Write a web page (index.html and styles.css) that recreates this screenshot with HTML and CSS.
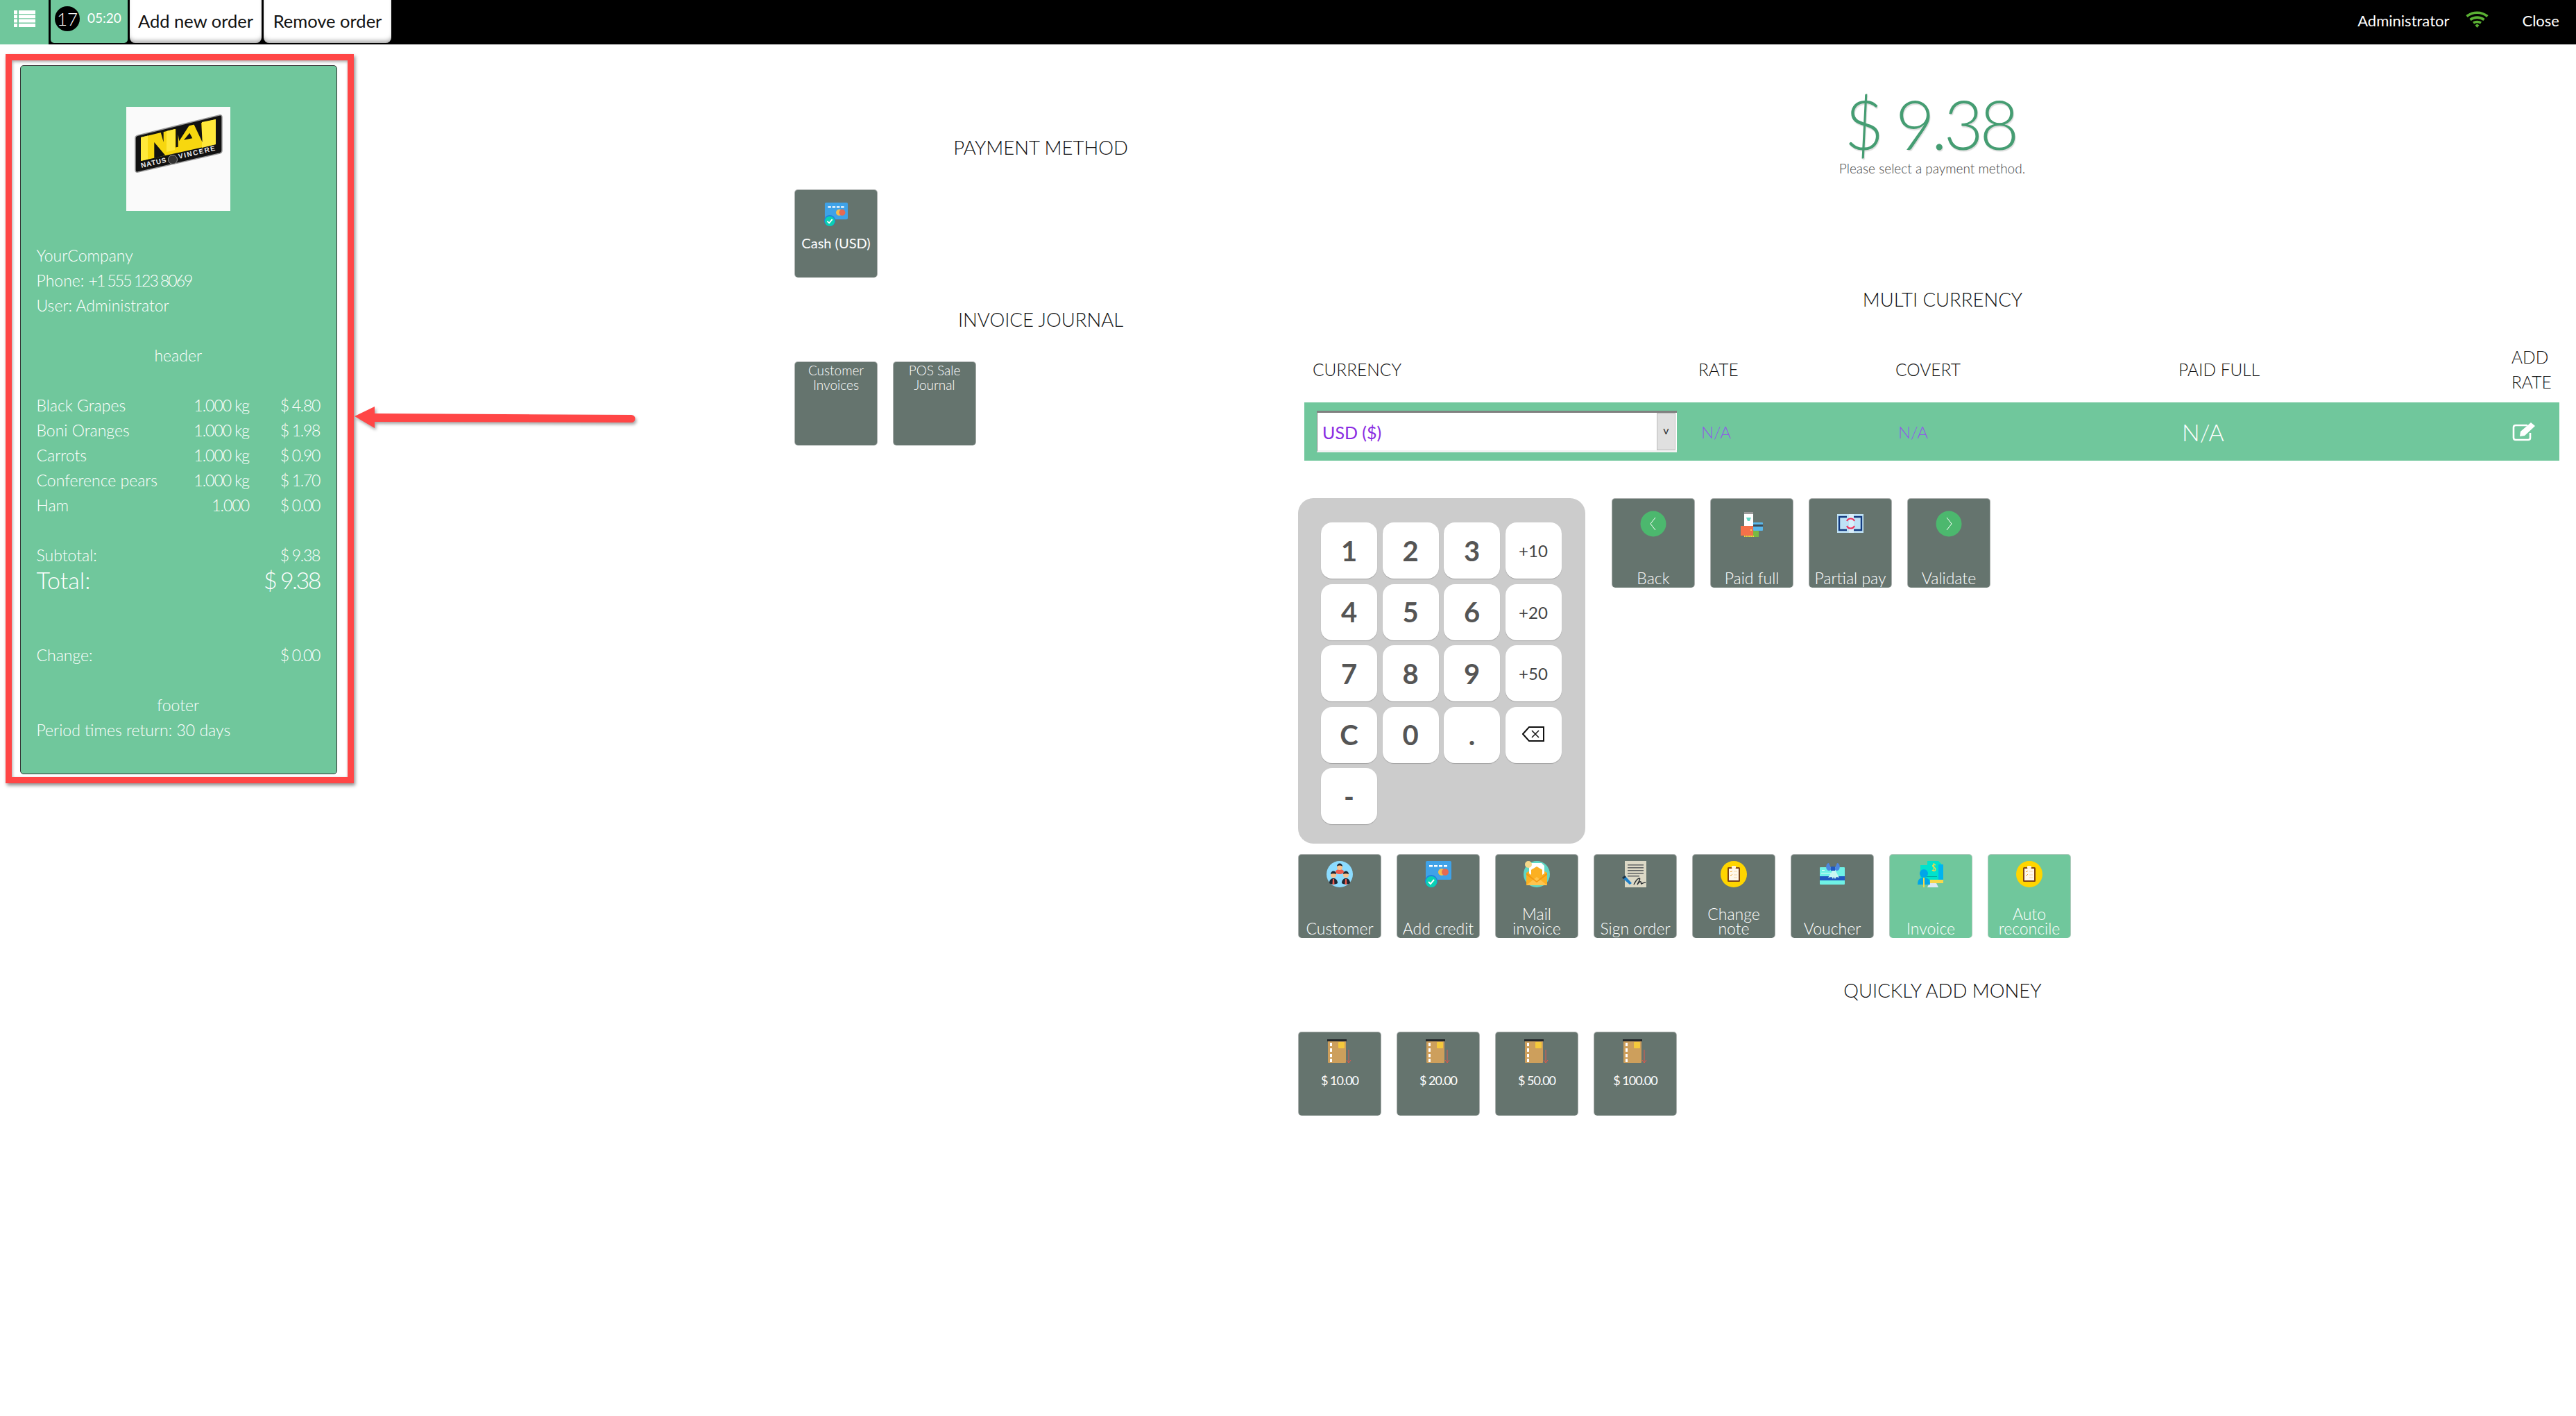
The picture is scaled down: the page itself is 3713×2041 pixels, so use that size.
FILE: index.html
```html
<!DOCTYPE html>
<html lang="en">
<head>
    <meta charset="UTF-8">
    <title>POS payment</title>
    <link rel="stylesheet" href="styles.css">
</head>
<body>

<!-- shared icons -->
<svg class="defs" width="0" height="0">
    <symbol id="ic-credit" viewBox="0 0 38 38">
        <rect x="1" y="0" width="37" height="27" rx="2" fill="#3fa2e8"/>
        <path d="M6 6h5v2.500H6zM13 6h5v2.500h-5zM20 6h5v2.500h-5zM27 6h5v2.500h-5z" fill="#fff"/>
        <circle cx="24" cy="16" r="5" fill="#f5bd4f"/>
        <circle cx="29" cy="16" r="5" fill="#e56a52"/>
        <circle cx="9" cy="29" r="9" fill="#1f7fe0"/>
        <circle cx="9" cy="30" r="8" fill="#0ad1b4"/>
        <path d="M5 30l3 3 5-6" fill="none" stroke="#fff" stroke-width="2"/>
    </symbol>
    <symbol id="ic-customer" viewBox="0 0 38 38">
        <circle cx="19" cy="19" r="19" fill="#8cdcff"/>
        <path d="M13 16c0-3 3-4 6-4s6 1 6 4c0 2-3 3-6 3s-6-1-6-3z" fill="#ef5b4c"/>
        <circle cx="19" cy="9" r="4" fill="#f7c08c"/>
        <path d="M15 8c0-6 8-6 8 0-2-2-6-2-8 0z" fill="#1d2733"/>
        <path d="M4 32c0-5 3-7 6-7s6 2 6 7c-3 2-9 2-12 0zM22 32c0-5 3-7 6-7s6 2 6 7c-3 2-9 2-12 0z" fill="#1d2733"/>
        <path d="M9 26h2l.5 8h-3zM27 26h2l.5 8h-3z" fill="#ef5b4c"/>
        <circle cx="10" cy="20" r="4" fill="#f7c08c"/>
        <circle cx="28" cy="20" r="4" fill="#f7c08c"/>
        <path d="M6 19c0-6 8-6 8 0-2-1-6-1-8 0zM24 19c0-6 8-6 8 0-2-1-6-1-8 0z" fill="#1d2733"/>
    </symbol>
    <symbol id="ic-mail" viewBox="0 0 38 38">
        <circle cx="19" cy="19" r="19" fill="#5fd6c4"/>
        <path d="M8 3h18l4 4v14H8z" fill="#fff"/>
        <path d="M12 11h14v2H12zM12 15h14v2H12z" fill="#e9eef0"/>
        <path d="M4 17l15-9 15 9v18H4z" fill="#fbb022"/>
        <path d="M8 13l3-1v8l-3-2zM30 12l-3 0v8l3-2z" fill="#fff"/>
        <path d="M4 35l15-12 15 12z" fill="#fdc44e"/>
        <path d="M4 17l15 12 15-12v3L19 31 4 20z" fill="#f39a12"/>
        <circle cx="7" cy="5" r="5" fill="#f5d88a"/>
    </symbol>
    <symbol id="ic-sign" viewBox="0 0 38 38">
        <rect x="4" y="0" width="31" height="38" fill="#dcd9c6"/>
        <path d="M8 5h23v1.500H8zM8 9h23v1.500H8zM8 13h23v1.500H8zM8 17h23v1.500H8zM8 21h17v1.500H8z" fill="#5b5f60"/>
        <path d="M0 24l4-3 10 11-3 2z" fill="#1f7fc8"/>
        <path d="M0 24l4-3 2 2-4 3z" fill="#23303a"/>
        <path d="M17 34c3-6 6-9 8-9s-2 7-3 9c2-3 4-5 5-4s0 3 1 3 2-2 6-2" fill="none" stroke="#2a2f33" stroke-width="1.500"/>
    </symbol>
    <symbol id="ic-note" viewBox="0 0 38 38">
        <circle cx="19" cy="19" r="19" fill="#ffd500"/>
        <rect x="10" y="9" width="18" height="21" rx="1.500" fill="#7b4317"/>
        <rect x="12" y="11" width="14" height="17" fill="#fff8ec"/>
        <rect x="16" y="7" width="6" height="4" rx="1" fill="#fff2d8"/>
        <path d="M14 15l1 1 2-2M14 20l1 1 2-2" fill="none" stroke="#f0a83a" stroke-width="1"/>
        <path d="M19 15h5M19 20h5M19 24h5" stroke="#f3d9a8" stroke-width="1"/>
    </symbol>
    <symbol id="ic-voucher" viewBox="0 0 38 38">
        <rect x="1" y="9" width="36" height="25" rx="1" fill="#6ff1e6"/>
        <rect x="1" y="22" width="36" height="6" fill="#2058c0"/>
        <path d="M4 13h4v1H4zM3 17h14v1H3z" fill="#e6fffb"/>
        <path d="M20 13l-7 11 5-1 2 3 1-3 2 3 2-3 4 1-6-11z" fill="#c9f6f2"/>
        <path d="M18 12L14 3c-3 0-5 5-3 9 2 3 5 2 7 0zM22 12l4-9c3 0 5 5 3 9-2 3-5 2-7 0z" fill="#4c86e0"/>
        <rect x="17" y="8" width="6" height="6" fill="#2058c0"/>
    </symbol>
    <symbol id="ic-invoice" viewBox="0 0 38 38">
        <path d="M4 6h10V0h16l5 5v24H4z" fill="#00e2cc"/>
        <path d="M30 5h7v22H30z" fill="#00b4f0"/>
        <path d="M26 6c-3-2-5 0-4 2s4 1 4 4-3 3-5 1M23.500 3v12" fill="none" stroke="#f6d84a" stroke-width="1.300"/>
        <path d="M12 22h16v1H12z" fill="#00a89e"/>
        <path d="M18 32h19v-5H18z" fill="#f6d84a"/>
        <path d="M14 38l3-6h10l3 6z" fill="#dbe9f4"/>
        <circle cx="9" cy="18" r="6" fill="#00a6e8"/>
        <path d="M0 34c0-8 4-10 9-10s9 2 9 10z" fill="#00a6e8"/>
        <path d="M8 24h2v14H8z" fill="#f6d84a"/>
    </symbol>
    <symbol id="ic-money" viewBox="0 0 36 36">
        <rect x="1" y="1" width="26" height="33" rx="1" fill="#cd9f5c"/>
        <rect x="0" y="0" width="28" height="3" fill="#23272b"/>
        <path d="M4 5h3v5H4zM4 13h3v5H4zM4 21h3v5H4zM4 28h3v5H4z" fill="#fff"/>
        <rect x="16" y="4" width="9" height="9" rx="1" fill="#f4c93c"/>
        <path d="M31 15v19M28 30l3 4 3-4" fill="none" stroke="#e0584c" stroke-width="1"/>
    </symbol>
    <symbol id="ic-paid" viewBox="0 0 38 38">
        <rect x="8" y="2" width="13" height="22" rx="1" fill="#fff"/>
        <rect x="8" y="2" width="13" height="3" fill="#9a9a9a"/>
        <path d="M11 10h7l-2 5h-3z" fill="#5fd6c4"/>
        <rect x="14" y="26" width="15" height="12" fill="#79b943"/>
        <rect x="21" y="17" width="14" height="12" rx="1" fill="#5ab7ea"/>
        <rect x="21" y="20" width="14" height="3" fill="#3b4a55"/>
        <path d="M8 37h15" stroke="#f2d43c" stroke-width="2" stroke-dasharray="2 1"/>
        <rect x="3" y="22" width="18" height="14" fill="#f4714a"/>
        <circle cx="18" cy="28" r="1" fill="#ffe27a"/>
    </symbol>
    <symbol id="ic-partial" viewBox="0 0 38 38">
        <rect x="0" y="5" width="38" height="27" fill="#bfe2f6"/>
        <rect x="17" y="5" width="7" height="27" fill="#d9eefa"/>
        <path d="M14 9H3v19h11M24 9h11v19H24" fill="none" stroke="#123a80" stroke-width="2.400"/>
        <path d="M14 15a6 6 0 0 1 11 0M25 22a6 6 0 0 1-11 0" fill="none" stroke="#ef2f5b" stroke-width="2"/>
    </symbol>
</svg>

<div class="topbar">
    <a class="menu-btn" href="#">
        <svg class="menu-icon" viewBox="0 0 31 24"><path d="M0 0h5v5H0zM7 0h24v5H7zM0 6.300h5v5H0zM7 6.300h24v5H7zM0 12.600h5v5H0zM7 12.600h24v5H7zM0 19h5v5H0zM7 19h24v5H7z" fill="#fff"/></svg>
    </a>
    <div class="order-tab">
        <span class="order-no">17</span>
        <span class="order-time">05:20</span>
    </div>
    <a class="top-btn add-btn" href="#">Add new order</a>
    <a class="top-btn remove-btn" href="#">Remove order</a>
    <div class="top-right">
        <span class="user-name">Administrator</span>
        <svg class="wifi" viewBox="0 0 33 24"><g fill="none" stroke="#5ab033" stroke-width="3.600"><path d="M1.500 7.500c9-7 21-7 30 0"/><path d="M6.500 12.500c6-4.500 14-4.500 20 0"/><path d="M11 17c3-2 8-2 11 0"/></g><path d="M13.500 20.500l3-2 3 2-3 3.500z" fill="#5ab033"/></svg>
        <span class="close-link">Close</span>
    </div>
</div>

<div class="main">

    <div class="left-col">
        <div class="red-frame">
            <div class="receipt">
                <div class="receipt-logo">
                    <svg class="navi" viewBox="0 0 150 150">
                        <path d="M17 41L134 12q4-1 4 3v48q0 3-3 4L17 94q-4 1-4-3V45q0-3 4-4z" fill="#111" stroke="#9a9a9a" stroke-width="1.500"/>
                        <path d="M21 44L129 18v36L21 78z" fill="#f7d70f"/>
                        <path d="M21 44l10-2.500v34L21 78zM58 35l12-3v30l-12 3zM109 22l20-4v36l-20 5z" fill="#ffe83a"/>
                        <!-- dark cuts between the letters -->
                        <path d="M40.300 51v23l16-4zM49.700 36.700l4-.700V51zM71.300 30l3.400-.700v28.400l-3.400.800zM73 30l18.300-4-15 23.300zM83 47.700l8.300-10 4 7.600zM96.300 22.700l11.700-2.700 1.700 31z" fill="#111"/>
                        <text x="22" y="88" class="navi-text" transform="rotate(-13 22 88)" textLength="37">NATUS</text>
                        <circle cx="67" cy="76" r="6.500" fill="#333" stroke="#999"/>
                        <text x="76" y="75" class="navi-text" transform="rotate(-13 76 75)" textLength="54">VINCERE</text>
                    </svg>
                </div>
                <div class="rc-line">YourCompany</div>
                <div class="rc-line">Phone: <span class="rc-phone">+1 555 123 8069</span></div>
                <div class="rc-line">User: Administrator</div>
                <div class="rc-gap"></div>
                <div class="rc-line rc-center">header</div>
                <div class="rc-gap"></div>
                <div class="rc-item"><span>Black Grapes</span><span class="rc-qty">1.000 kg</span><span class="rc-price">$ 4.80</span></div>
                <div class="rc-item"><span>Boni Oranges</span><span class="rc-qty">1.000 kg</span><span class="rc-price">$ 1.98</span></div>
                <div class="rc-item"><span>Carrots</span><span class="rc-qty">1.000 kg</span><span class="rc-price">$ 0.90</span></div>
                <div class="rc-item"><span>Conference pears</span><span class="rc-qty">1.000 kg</span><span class="rc-price">$ 1.70</span></div>
                <div class="rc-item"><span>Ham</span><span class="rc-qty">1.000</span><span class="rc-price">$ 0.00</span></div>
                <div class="rc-gap"></div>
                <div class="rc-total"><span>Subtotal:</span><span class="rc-num">$ 9.38</span></div>
                <div class="rc-total rc-big"><span>Total:</span><span class="rc-num">$ 9.38</span></div>
                <div class="rc-gap"></div>
                <div class="rc-gap"></div>
                <div class="rc-total"><span>Change:</span><span class="rc-num">$ 0.00</span></div>
                <div class="rc-gap"></div>
                <div class="rc-line rc-center">footer</div>
                <div class="rc-line">Period times return: 30 days</div>
            </div>
        </div>
        <svg class="arrow" viewBox="0 0 405 33"><path d="M0 14L29 0v10l370 2a5.500 5.500 0 0 1 0 11L29 22v9z" fill="#ff4646"/></svg>
    </div>

    <div class="mid-col">
        <div class="mid-title first-title">PAYMENT METHOD</div>
        <div class="tiles">
            <a class="tile tile-cash" href="#"><svg class="tile-icon"><use href="#ic-credit"/></svg><span class="tile-label">Cash (USD)</span></a>
        </div>
        <div class="mid-title second-title">INVOICE JOURNAL</div>
        <div class="tiles">
            <a class="tile tile-journal" href="#"><span class="tile-label">Customer Invoices</span></a>
            <a class="tile tile-journal" href="#"><span class="tile-label">POS Sale Journal</span></a>
        </div>
    </div>

    <div class="right-col">
        <div class="amount">$ 9.38</div>
        <div class="amount-sub">Please select a payment method.</div>

        <div class="sec-title multi-title">MULTI CURRENCY</div>
        <div class="cur-head">
            <div>CURRENCY</div>
            <div>RATE</div>
            <div>COVERT</div>
            <div>PAID FULL</div>
            <div>ADD<br>RATE</div>
        </div>
        <div class="cur-row">
            <div class="cur-cell">
                <div class="cur-select"><span class="cur-value">USD ($)</span><span class="cur-arrow">v</span></div>
            </div>
            <div class="cur-na">N/A</div>
            <div class="cur-na">N/A</div>
            <div class="cur-paid">N/A</div>
            <div class="cur-edit">
                <svg viewBox="0 0 38 28"><path d="M27 16v7q0 3-3 3H6q-3 0-3-3V8q0-3 3-3h17" fill="none" stroke="#fff" stroke-width="2.600"/><path d="M13 14L28 1l6 5-15 14-7 1z" fill="#fff"/></svg>
            </div>
        </div>

        <div class="pay-row">
            <div class="numpad">
                <button class="key">1</button><button class="key">2</button><button class="key">3</button><button class="key key-small">+10</button>
                <button class="key">4</button><button class="key">5</button><button class="key">6</button><button class="key key-small">+20</button>
                <button class="key">7</button><button class="key">8</button><button class="key">9</button><button class="key key-small">+50</button>
                <button class="key">C</button><button class="key">0</button><button class="key">.</button>
                <button class="key key-small"><svg class="back-icon" viewBox="0 0 32 22"><path d="M10 1h21v20H10L1 11z" fill="none" stroke="#111" stroke-width="2"/><path d="M14 6l10 10M24 6L14 16" stroke="#111" stroke-width="1.500"/></svg></button>
                <button class="key">-</button>
            </div>
            <div class="tiles actions">
                <a class="tile tile-action" href="#"><svg class="tile-icon" viewBox="0 0 38 38"><circle cx="19" cy="19" r="18.500" fill="#4cb86e"/><path d="M22 10l-7 9 7 9" fill="none" stroke="#fff" stroke-width="1"/></svg><span class="tile-label">Back</span></a>
                <a class="tile tile-action" href="#"><svg class="tile-icon"><use href="#ic-paid"/></svg><span class="tile-label">Paid full</span></a>
                <a class="tile tile-action" href="#"><svg class="tile-icon"><use href="#ic-partial"/></svg><span class="tile-label">Partial pay</span></a>
                <a class="tile tile-action" href="#"><svg class="tile-icon" viewBox="0 0 38 38"><circle cx="19" cy="19" r="18.500" fill="#4cb86e"/><path d="M16 10l7 9-7 9" fill="none" stroke="#fff" stroke-width="1"/></svg><span class="tile-label">Validate</span></a>
            </div>
        </div>

        <div class="tiles extras">
            <a class="tile" href="#"><svg class="tile-icon"><use href="#ic-customer"/></svg><span class="tile-label">Customer</span></a>
            <a class="tile" href="#"><svg class="tile-icon"><use href="#ic-credit"/></svg><span class="tile-label">Add credit</span></a>
            <a class="tile" href="#"><svg class="tile-icon"><use href="#ic-mail"/></svg><span class="tile-label">Mail<br>invoice</span></a>
            <a class="tile" href="#"><svg class="tile-icon"><use href="#ic-sign"/></svg><span class="tile-label">Sign order</span></a>
            <a class="tile" href="#"><svg class="tile-icon"><use href="#ic-note"/></svg><span class="tile-label">Change<br>note</span></a>
            <a class="tile" href="#"><svg class="tile-icon"><use href="#ic-voucher"/></svg><span class="tile-label">Voucher</span></a>
            <a class="tile tile-on" href="#"><svg class="tile-icon"><use href="#ic-invoice"/></svg><span class="tile-label">Invoice</span></a>
            <a class="tile tile-on" href="#"><svg class="tile-icon"><use href="#ic-note"/></svg><span class="tile-label">Auto<br>reconcile</span></a>
        </div>

        <div class="sec-title quick-title">QUICKLY ADD MONEY</div>
        <div class="tiles extras quick-tiles">
            <a class="tile tile-money" href="#"><svg class="tile-icon"><use href="#ic-money"/></svg><span class="tile-label">$ 10.00</span></a>
            <a class="tile tile-money" href="#"><svg class="tile-icon"><use href="#ic-money"/></svg><span class="tile-label">$ 20.00</span></a>
            <a class="tile tile-money" href="#"><svg class="tile-icon"><use href="#ic-money"/></svg><span class="tile-label">$ 50.00</span></a>
            <a class="tile tile-money" href="#"><svg class="tile-icon"><use href="#ic-money"/></svg><span class="tile-label">$ 100.00</span></a>
        </div>
    </div>
</div>

</body>
</html>
```

FILE: styles.css
```css
*{margin:0;padding:0;box-sizing:border-box;}
a{text-decoration:none;color:inherit;}
body{background:#fff;font-family:"Lato","Liberation Sans",sans-serif;font-weight:300;color:#111;}
.defs{display:block;height:0;overflow:hidden;}

/* top bar */
.topbar{display:flex;align-items:flex-start;height:64px;background:#000;}
.menu-btn{display:flex;align-items:center;justify-content:center;width:70px;height:64px;background:#70c79c;}
.menu-icon{width:31px;height:24px;margin-top:-10px;}
.order-tab{display:flex;align-items:flex-start;width:111px;height:62px;margin-left:3px;padding:9px 0 0 6px;background:#70c79c;border-radius:0 0 5px 5px;color:#fff;}
.order-no{width:36px;height:36px;border-radius:50%;background:#000;font-size:26px;line-height:36px;text-align:center;}
.order-time{margin:6px 0 0 11px;font-size:19px;line-height:22px;font-weight:400;}
.top-btn{height:62px;margin-left:3px;padding-top:13px;background:#fff;border-radius:0 0 8px 8px;box-shadow:inset 0 -6px 6px -3px rgba(0,0,0,.35);font-size:25.500px;line-height:34px;font-weight:400;text-align:center;color:#111;}
.add-btn{width:190px;}
.remove-btn{width:184px;}
.top-right{display:flex;align-items:center;margin-left:auto;height:58px;padding-right:24px;color:#fff;font-size:22px;font-weight:400;}
.wifi{width:33px;height:24px;margin:-2px 48px 0 24px;}

/* page columns */
.main{display:flex;align-items:flex-start;}
.left-col{position:relative;width:1145px;padding:14px 0 0 8px;}
.mid-col{width:726px;padding-top:131px;}
.right-col{width:1842px;}

/* receipt */
.red-frame{width:502px;height:1051px;padding:7px 15px 4px 11.500px;border:9px solid #ff4646;box-shadow:2px 3px 5px rgba(0,0,0,.45),inset 1px 2px 4px rgba(0,0,0,.35);}
.receipt{height:1022px;padding:59px 24px 0 23px;background:#70c79c;border:1px solid #333;border-radius:5px;color:#fff;font-size:23px;line-height:36px;}
.receipt-logo{width:150px;height:150px;margin:0 auto 46px;background:#fafafa;}
.navi{display:block;width:150px;height:150px;}
.navi-text{font-family:"Liberation Sans",sans-serif;font-size:10px;font-weight:700;fill:#eee;}
.rc-center{text-align:center;}
.rc-gap{height:36px;}
.rc-item{display:flex;}
.rc-item span:first-child{flex:1;}
.rc-qty{width:120px;text-align:right;letter-spacing:-1px;}
.rc-price{width:102px;text-align:right;letter-spacing:-1.300px;}
.rc-num{letter-spacing:-1.300px;}
.rc-phone{letter-spacing:-2px;}
.rc-total{display:flex;justify-content:space-between;}
.rc-big{font-size:34px;}
.rc-big .rc-num{letter-spacing:-2.500px;}
.arrow{position:absolute;left:511px;top:522px;width:405px;height:33px;filter:drop-shadow(2px 3px 2px rgba(0,0,0,.35));}

/* titles */
.mid-title{width:710px;font-size:27.500px;line-height:36px;text-align:center;}
.second-title{margin:43px 0 42px;}
.first-title{margin-bottom:42px;}
.sec-title{padding-left:16px;font-size:27.500px;line-height:36px;text-align:center;}

/* tiles */
.tiles{display:flex;gap:22px;}
.tile{display:flex;flex-direction:column;align-items:center;width:120px;height:121px;padding:9px 0 3px;background:#65746e;border:1px solid rgba(204,204,204,.7);border-width:1px 1px 0;border-radius:5px;color:#fff;font-size:23px;line-height:21px;text-align:center;}
.tile-on{background:#70c79c;}
.tile-icon{display:block;width:38px;height:38px;flex:none;}
.tile-label{margin-top:auto;}
.tile-cash{height:127px;padding-top:18px;font-size:20px;font-weight:400;}
.tile-cash .tile-icon{width:38px;height:34px;}
.tile-cash .tile-label{margin-top:14px;}
.tile-journal{padding-top:1px;font-size:19px;}
.tile-journal .tile-label{margin-top:0;padding:0 14px;}
.tile-action{height:129px;padding-top:17px;}
.tile-money{padding-top:10px;font-size:18px;font-weight:400;letter-spacing:-1px;}
.tile-money .tile-icon{width:36px;height:36px;}
.tile-money .tile-label{margin-top:13px;}

/* amount */
.amount{padding:64px 20px 0 0;font-size:98px;line-height:100px;letter-spacing:-5px;text-align:center;color:#459d72;text-shadow:1px 2px 1px #ddd;}
.amount-sub{margin-top:4px;padding-right:14px;font-size:19px;line-height:22px;text-align:center;color:#444;}

/* multi currency */
.multi-title{margin-top:160px;}
.cur-head,.cur-row{display:grid;grid-template-columns:556px 284px 408px 480px 81px;width:1809px;margin-left:9px;}
.cur-head{align-items:center;margin-top:47px;padding-bottom:11px;font-size:24.500px;line-height:36px;}
.cur-head div{padding-left:12px;}
.cur-row{align-items:center;height:84px;background:#70c79c;}
.cur-cell{padding-left:18px;}
.cur-select{display:flex;align-items:stretch;justify-content:space-between;width:519px;height:60px;padding:0 2px 0 1px;background:#fff;border-top:3px solid #808080;border-left:1px solid #808080;border-bottom:3px solid #f2f2f2;}
.cur-value{padding-left:6px;font-size:25px;line-height:56px;font-weight:400;color:#8a2be2;}
.cur-arrow{width:27px;background:#e0e0e0;border:1px solid #bbb;font-size:16px;line-height:48px;font-weight:400;text-align:center;color:#333;}
.cur-na{padding-left:16px;font-size:24px;color:#8f5be8;}
.cur-paid{padding-left:17px;font-size:34px;color:#fff;}
.cur-edit{padding-left:12px;line-height:0;}
.cur-edit svg{width:38px;height:28px;}

/* numpad */
.pay-row{display:flex;align-items:flex-start;gap:38px;margin:54px 0 0 0;}
.numpad{display:grid;grid-template-columns:repeat(4,81px);grid-template-rows:repeat(5,81px);gap:7.500px;width:414px;height:498px;padding:35px 35px 28px 33px;background:#ccc;border-radius:22px;}
.key{background:#fff;border:0;border-radius:16px;box-shadow:0 1px 1px rgba(0,0,0,.2);font-family:"Lato",sans-serif;font-size:40px;font-weight:700;color:#555;}
.key-small{font-size:24px;font-weight:400;color:#444;}
.back-icon{width:32px;height:22px;}

/* bottom tiles */
.extras{margin:15px 0 0 0;}
.quick-title{margin-top:58px;}
.quick-tiles{margin-top:41px;}
```
